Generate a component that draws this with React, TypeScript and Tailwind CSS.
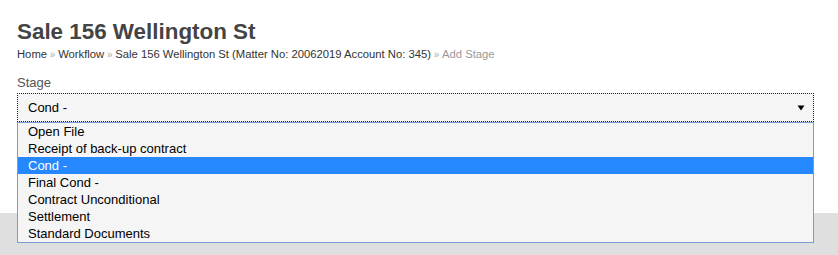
import React from "react";

const options = [
  "Open File",
  "Receipt of back-up contract",
  "Cond -",
  "Final Cond -",
  "Contract Unconditional",
  "Settlement",
  "Standard Documents",
];

export default function App() {
  return (
    <div className="w-[838px] h-[255px] flex flex-col font-['Liberation_Sans',Arial,sans-serif] overflow-hidden">
      <div className="h-[213px] shrink-0 bg-white px-[17px] pt-[19px]">
        <h1 className="text-[22.4px] leading-[26px] font-bold text-[#444]">Sale 156 Wellington St</h1>
        <div className="mt-[1px] text-[11.25px] leading-[16px] text-[#333]">
          <span>Home</span>
          <span className="text-[#aaa] text-[10px]"> » </span>
          <span>Workflow</span>
          <span className="text-[#aaa] text-[10px]"> » </span>
          <span>Sale 156 Wellington St (Matter No: 20062019 Account No: 345)</span>
          <span className="text-[#aaa] text-[10px]"> » </span>
          <span className="text-[#999]">Add Stage</span>
        </div>
        <div className="mt-[12px] text-[13px] leading-[16px] text-[#555]">Stage</div>
        <div className="relative mt-[2px] w-[797px]">
          <div className="h-[29px] border border-dotted border-[#222] bg-[#f5f5f5] flex items-center pl-[10px] pr-[8px] text-[13px] text-black">
            <span className="flex-1">Cond -</span>
            <svg width="8" height="6" viewBox="0 0 8 6" className="mt-[1px]">
              <path d="M0.5 0.5 L7.5 0.5 L4 5.5 Z" fill="#000" />
            </svg>
          </div>
          <div className="absolute left-0 top-[29px] w-[797px] border border-[#7b9bd6] bg-[#f5f5f5] z-10">
            {options.map((o) => (
              <div
                key={o}
                className={
                  o === "Cond -"
                    ? "h-[17px] leading-[17px] pl-[10px] text-[13px] bg-[#2688fe] text-white"
                    : "h-[17px] leading-[17px] pl-[10px] text-[13px] text-black"
                }
              >
                {o}
              </div>
            ))}
          </div>
        </div>
      </div>
      <div className="flex-1 bg-[#dfdfdf]" />
    </div>
  );
}
